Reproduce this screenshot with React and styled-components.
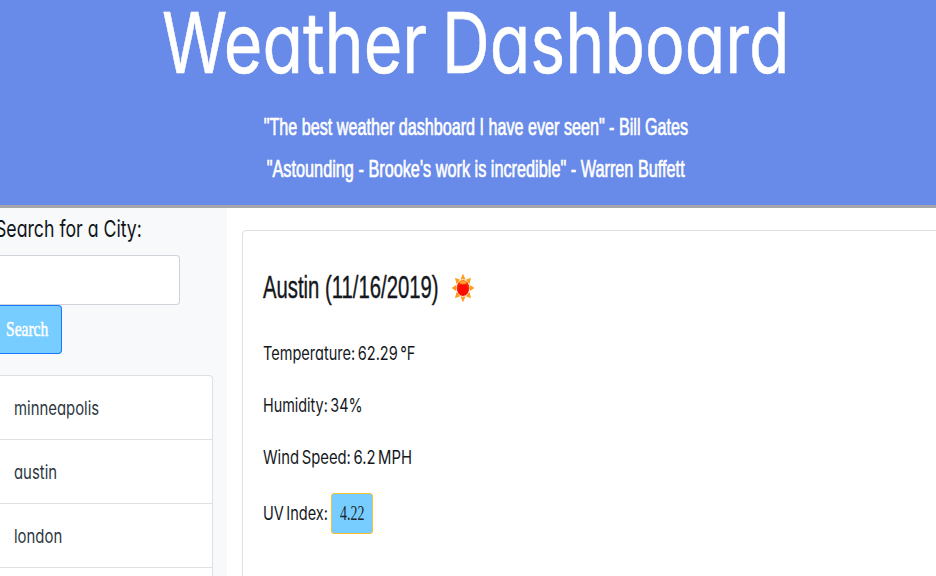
import React from 'react';
import styled, { createGlobalStyle } from 'styled-components';

const GlobalStyle = createGlobalStyle`
  * { box-sizing: border-box; }
  html, body { margin: 0; height: 576px; overflow: hidden; background: #fff; }
  body { font-family: Inter, sans-serif; font-feature-settings: "cv11"; color: #14181c; }
`;

const Page = styled.div`
  display: flex;
  flex-direction: column;
  width: 100%;
  height: 576px;
  overflow: hidden;
`;

const Header = styled.header`
  flex: none;
  display: flex;
  flex-direction: column;
  align-items: center;
  width: 952px;
  height: 208px;
  background: #688ae8;
  border-bottom: 3px solid #a5a6aa;
  color: #fff;
`;

const Title = styled.h1`
  margin: 0;
  height: 105px;
  font-size: 83.5px;
  line-height: 86px;
  font-weight: 400;
  word-spacing: -5px;
  -webkit-text-stroke: 0.6px #fff;
  white-space: nowrap;
  transform: scaleX(0.793);
`;

const Quote = styled.p`
  margin: 0;
  height: 42px;
  font: 24.5px/43px "Liberation Sans", sans-serif;
  -webkit-text-stroke: 0.7px #fff;
  white-space: nowrap;
  transform: scaleX(${(p) => p.$squeeze});
`;

const Body = styled.div`
  flex: 1;
  display: flex;
  min-height: 0;
`;

const Sidebar = styled.aside`
  flex: none;
  width: 227px;
  padding-top: 1px;
  background: #f8f9fb;
`;

const Squeezed = styled.span`
  display: inline-block;
  white-space: nowrap;
  transform-origin: 0 50%;
  transform: scaleX(${(p) => p.$by});
`;

const SearchLabel = styled.label`
  display: block;
  height: 46px;
  margin-left: -5px;
  font-size: 23.5px;
  line-height: 39px;
  color: #101418;
`;

const CityInput = styled.input`
  display: block;
  width: 180px;
  height: 50px;
  border: 1px solid #ced4da;
  border-left: 0;
  border-radius: 0 4px 4px 0;
  background: #fff;
  outline: none;
`;

const SearchButton = styled.button`
  display: block;
  width: 62px;
  height: 49px;
  padding: 0 0 0 6px;
  border: 1px solid #1677ff;
  border-left: 0;
  border-radius: 0 4px 4px 0;
  background: #77cdff;
  color: #fff;
  font: 21px "Liberation Serif", serif;
  -webkit-text-stroke: 0.5px #fff;
  text-align: left;
`;

const History = styled.ul`
  width: 213px;
  margin: 21px 0 0;
  padding: 0;
  list-style: none;
  background: #fff;
  border: 1px solid #dfdfdf;
  border-left: 0;
  border-radius: 0 4px 0 0;
`;

const City = styled.li`
  height: 64px;
  padding-left: 13.5px;
  border-bottom: 1px solid #dfdfdf;
  font-size: 18.5px;
  line-height: 64px;
  color: #2d3741;
`;

const Card = styled.main`
  flex: none;
  width: 720px;
  height: 400px;
  margin: 22px 0 0 15px;
  padding: 37px 19.5px 0;
  border: 1px solid #dfdfdf;
  border-radius: 4px;
`;

const CardTitle = styled.h2`
  display: flex;
  align-items: center;
  gap: 12px;
  height: 39px;
  margin: 0 0 20px;
  font: 30.5px "Liberation Sans", sans-serif;
  -webkit-text-stroke: 0.4px #14181c;
`;

const CityName = styled.span`
  width: 176px;
`;

const SunIcon = styled.svg`
  width: 24px;
  height: 30px;
`;

const Reading = styled.p`
  display: flex;
  align-items: center;
  height: ${(p) => (p.$tall ? '60px' : '52px')};
  margin: 0;
  font-size: 18.5px;
  word-spacing: -2px;
`;

const ReadingName = styled.span`
  width: 68.5px;
`;

const UvBadge = styled.span`
  width: 42px;
  height: 41px;
  margin-top: 1px;
  padding-left: 8px;
  border: 1px solid #f8c02c;
  border-radius: 3px;
  background: #77cdff;
  font: 20px/38px "Liberation Serif", serif;
  color: #212529;
`;

const rays = [0, 45, 90, 135, 180, 225, 270, 315];

function Sun() {
  return (
    <SunIcon viewBox="0 0 24 30" preserveAspectRatio="none">
      <defs>
        <radialGradient id="core" cx="50%" cy="60%" r="62%">
          <stop offset="0.55" stopColor="#ff0a00" />
          <stop offset="0.85" stopColor="#f83a08" />
          <stop offset="1" stopColor="#ff9a1c" />
        </radialGradient>
      </defs>
      <g transform="translate(12 15) scale(1 1.27)">
        {rays.map((a) => (
          <path key={a} d="M-2.5-6.6 0-11.4 2.5-6.6Z" fill="#ff9d1e" transform={`rotate(${a})`} />
        ))}
        <circle r="6.3" fill="url(#core)" />
        <ellipse cy="-4.4" rx="3.6" ry="1.4" fill="#ff9c2a" />
      </g>
    </SunIcon>
  );
}

const cities = ['minneapolis', 'austin', 'london', ''];

const readings = [
  { text: 'Temperature: 62.29 °F', squeeze: 0.786 },
  { text: 'Humidity: 34%', squeeze: 0.778 },
  { text: 'Wind Speed: 6.2 MPH', squeeze: 0.802 },
];

export default function App() {
  return (
    <Page>
      <GlobalStyle />
      <Header>
        <Title>Weather Dashboard</Title>
        <Quote $squeeze={0.659}>"The best weather dashboard I have ever seen" - Bill Gates</Quote>
        <Quote $squeeze={0.664}>"Astounding - Brooke's work is incredible" - Warren Buffett</Quote>
      </Header>
      <Body>
        <Sidebar>
          <SearchLabel htmlFor="city">
            <Squeezed $by={0.753}>Search for a City:</Squeezed>
          </SearchLabel>
          <CityInput id="city" />
          <SearchButton>
            <Squeezed $by={0.74}>Search</Squeezed>
          </SearchButton>
          <History>
            {cities.map((c) => (
              <City key={c}>
                <Squeezed $by={0.805}>{c}</Squeezed>
              </City>
            ))}
          </History>
        </Sidebar>
        <Card>
          <CardTitle>
            <CityName>
              <Squeezed $by={0.665}>Austin (11/16/2019)</Squeezed>
            </CityName>
            <Sun />
          </CardTitle>
          {readings.map((r) => (
            <Reading key={r.text}>
              <Squeezed $by={r.squeeze}>{r.text}</Squeezed>
            </Reading>
          ))}
          <Reading $tall>
            <ReadingName>
              <Squeezed $by={0.785}>UV Index:</Squeezed>
            </ReadingName>
            <UvBadge>
              <Squeezed $by={0.7}>4.22</Squeezed>
            </UvBadge>
          </Reading>
        </Card>
      </Body>
    </Page>
  );
}
